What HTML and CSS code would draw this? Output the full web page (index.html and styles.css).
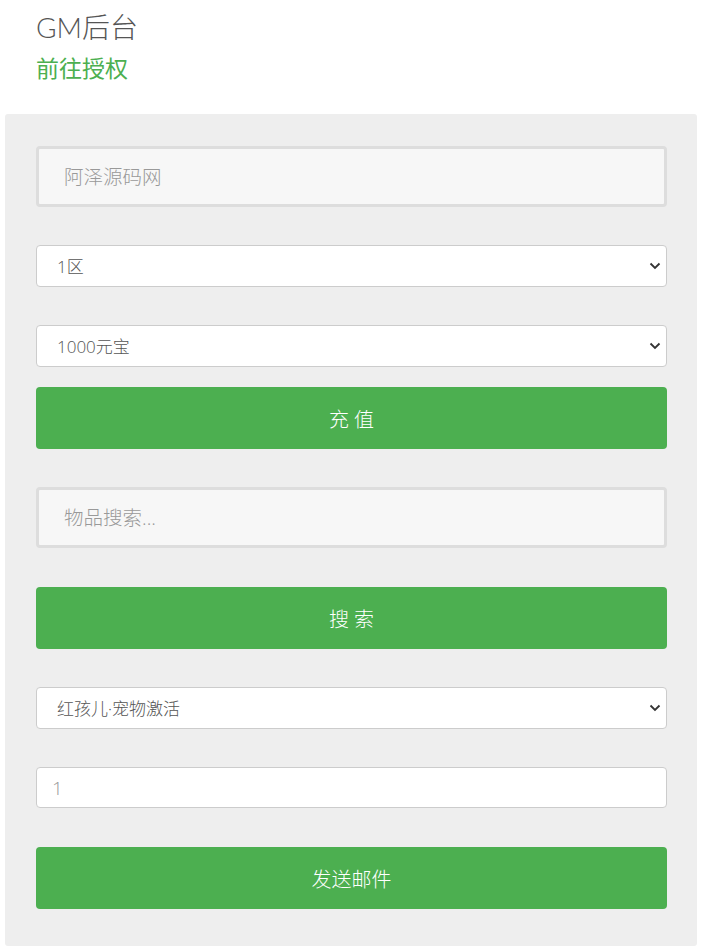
FILE: index.html
```html
<!DOCTYPE html>
<html lang="zh-CN">
<head>
<meta charset="utf-8">
<title>GM后台</title>
<link rel="stylesheet" href="styles.css">
</head>
<body>
<div class="page">
  <header class="head">
    <h1 class="title">GM后台</h1>
    <a class="auth" href="#">前往授权</a>
  </header>
  <main class="panel">
    <input class="field" type="text" placeholder="阿泽源码网">
    <div class="select-wrap gap-lg">
      <select class="sel"><option>1区</option></select>
      <svg class="chev" viewBox="0 0 12 8" width="12" height="8"><path d="M1.5 1.5 6 6l4.5-4.5" fill="none" stroke="#333" stroke-width="1.8"/></svg>
    </div>
    <div class="select-wrap gap-lg">
      <select class="sel"><option>1000元宝</option></select>
      <svg class="chev" viewBox="0 0 12 8" width="12" height="8"><path d="M1.5 1.5 6 6l4.5-4.5" fill="none" stroke="#333" stroke-width="1.8"/></svg>
    </div>
    <button class="btn gap-sm spaced">充值</button>
    <input class="field gap-lg" type="text" placeholder="物品搜索...">
    <button class="btn gap-xl spaced">搜索</button>
    <div class="select-wrap gap-lg">
      <select class="sel"><option>红孩儿·宠物激活</option></select>
      <svg class="chev" viewBox="0 0 12 8" width="12" height="8"><path d="M1.5 1.5 6 6l4.5-4.5" fill="none" stroke="#333" stroke-width="1.8"/></svg>
    </div>
    <input class="num gap-lg" type="text" placeholder="1">
    <button class="btn gap-xl">发送邮件</button>
  </main>
</div>
</body>
</html>
```
FILE: styles.css
```css
* { box-sizing: border-box; }
html, body { margin: 0; padding: 0; background: #fff; }
body {
  font-family: "Open Sans", "Noto Sans CJK SC", sans-serif;
  color: #555;
}
.page { padding: 0 8px 0 5px; }
.head {
  display: flex;
  flex-direction: column;
  align-items: flex-start;
  padding: 9px 0 0 31px;
  height: 114px;
}
.title {
  margin: 0;
  font-family: Lato, "Noto Sans CJK SC", sans-serif;
  font-weight: 300;
  font-size: 28px;
  line-height: 36px;
  color: #555;
}
.auth {
  margin-top: 8px;
  font-family: Lato, "Noto Sans CJK SC", sans-serif;
  font-size: 23px;
  line-height: 30px;
  color: #4CAF50;
  text-decoration: none;
}
.panel {
  background: #eee;
  border-radius: 3px;
  padding: 32px 30px 37px 31px;
  display: flex;
  flex-direction: column;
}
.gap-lg { margin-top: 38px; }
.gap-xl { margin-top: 39px; }
.gap-sm { margin-top: 20px; }
.field {
  display: block;
  width: 100%;
  height: 61px;
  border: 3px solid #ddd;
  border-radius: 4px;
  background: #f7f7f7;
  padding: 0 25px;
  font-family: "Open Sans", "Noto Sans CJK SC", sans-serif;
  font-size: 19.5px;
  font-weight: 300;
  color: #555;
  outline: none;
}
.field::placeholder { color: #999; }
.select-wrap { position: relative; }
.sel {
  display: block;
  width: 100%;
  height: 42px;
  border: 1px solid #ccc;
  border-radius: 4px;
  background: #fff;
  padding: 0 20px;
  font-family: "Open Sans", "Noto Sans CJK SC", sans-serif;
  font-size: 17px;
  font-weight: 300;
  color: #555;
  appearance: none;
  -webkit-appearance: none;
  outline: none;
}
.chev {
  position: absolute;
  right: 6px;
  top: 17px;
  pointer-events: none;
}
.num {
  display: block;
  width: 100%;
  height: 41px;
  border: 1px solid #ccc;
  border-radius: 4px;
  background: #fff;
  padding: 0 15px;
  font-family: "Open Sans", "Noto Sans CJK SC", sans-serif;
  font-size: 19px;
  font-weight: 300;
  color: #555;
  outline: none;
}
.num::placeholder { color: #999; }
.btn {
  display: block;
  width: 100%;
  height: 62px;
  border: none;
  border-radius: 4px;
  background: #4CAF50;
  color: #fff;
  font-family: "Open Sans", "Noto Sans CJK SC", sans-serif;
  font-size: 20px;
  font-weight: 300;
  cursor: pointer;
}
.spaced { letter-spacing: 5px; text-indent: 5px; }
```
